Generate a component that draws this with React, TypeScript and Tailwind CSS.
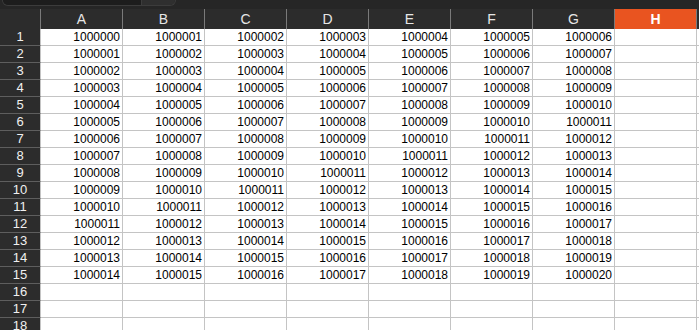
const COLS = ["A", "B", "C", "D", "E", "F", "G", "H"];
const ROWS = Array.from({ length: 18 }, (_, i) => i + 1);

function cellValue(row: number, col: number): string {
  if (row > 15 || col > 6) return "";
  return String(1000000 + row - 1 + col);
}

export default function App(): JSX.Element {
  return (
    <div
      className="w-[699px] h-[330px] overflow-hidden bg-[#2c2c2c] text-black"
      style={{ fontFamily: '"Liberation Sans", Arial, sans-serif' }}
    >
      <div className="h-[9px] bg-[#262626]">
        <div className="ml-[2px] w-[174px] h-[6px] flex rounded-b-[6px] border border-t-0 border-[#3c3c3c] overflow-hidden">
          <div className="w-[139px] bg-[#1d1d1d] border-r border-[#3c3c3c]" />
          <div className="flex-1 bg-[#2f2f2f]" />
        </div>
      </div>

      <div className="flex h-[20px]">
        <div className="w-[41px] shrink-0 border-r border-[#7a7a7a]" />
        {COLS.map((c) => (
          <div
            key={c}
            className={
              c === "H"
                ? "w-[82px] shrink-0 flex items-center justify-center bg-[#e95420] text-white font-bold text-[14px] border-r border-[#7a7a7a]"
                : "w-[82px] shrink-0 flex items-center justify-center text-[#e6e6e6] text-[14px] border-r border-[#7a7a7a]"
            }
          >
            {c}
          </div>
        ))}
        <div className="flex-1" />
      </div>

      {ROWS.map((r) => (
        <div key={r} className="flex h-[17px] bg-white">
          <div className="w-[41px] shrink-0 flex items-center justify-center bg-[#2c2c2c] text-[#f0f0f0] text-[13px] border-b border-[#5e5e5e] border-r border-r-[#c4c4c4]">
            {r}
          </div>
          {COLS.map((c, ci) => (
            <div
              key={c}
              className="w-[82px] shrink-0 flex items-center justify-end pr-[2px] text-[12px] leading-[16px] border-r border-b border-[#c4c4c4]"
            >
              {cellValue(r, ci)}
            </div>
          ))}
          <div className="flex-1 border-b border-[#c4c4c4]" />
        </div>
      ))}
    </div>
  );
}
